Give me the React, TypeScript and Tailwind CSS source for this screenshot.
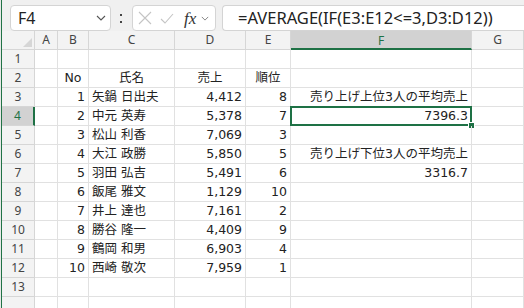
const cols = ["A", "B", "C", "D", "E", "F", "G"];

type Row = {
  no?: string;
  name?: string;
  sales?: string;
  rank?: string;
  f?: string;
  header?: boolean;
};

const rows: Row[] = [
  {},
  { no: "No", name: "氏名", sales: "売上", rank: "順位", header: true },
  { no: "1", name: "矢鍋 日出夫", sales: "4,412", rank: "8", f: "売り上げ上位3人の平均売上" },
  { no: "2", name: "中元 英寿", sales: "5,378", rank: "7", f: "7396.3" },
  { no: "3", name: "松山 利香", sales: "7,069", rank: "3" },
  { no: "4", name: "大江 政勝", sales: "5,850", rank: "5", f: "売り上げ下位3人の平均売上" },
  { no: "5", name: "羽田 弘吉", sales: "5,491", rank: "6", f: "3316.7" },
  { no: "6", name: "飯尾 雅文", sales: "1,129", rank: "10" },
  { no: "7", name: "井上 達也", sales: "7,161", rank: "2" },
  { no: "8", name: "勝谷 隆一", sales: "4,409", rank: "9" },
  { no: "9", name: "鶴岡 和男", sales: "6,903", rank: "4" },
  { no: "10", name: "西崎 敬次", sales: "7,959", rank: "1" },
  {},
  {},
];

const gridCols = "grid grid-cols-[33px_23px_31px_86px_71px_45px_181px_1fr]";
const cell = "h-[19px] border-r border-b border-[#e1e1e1] flex items-center overflow-visible whitespace-nowrap";

function Chevron({ className }: { className?: string }) {
  return (
    <svg className={className} viewBox="0 0 10 6" fill="none" stroke="currentColor" strokeWidth={1.1} aria-hidden="true">
      <path d="M1 1l4 4 4-4" />
    </svg>
  );
}

export default function App() {
  return (
    <div className="flex h-[308px] w-[524px] overflow-hidden bg-white text-[#222] [font-family:'DejaVu_Sans','Noto_Sans_CJK_JP',sans-serif]">
      <div className="w-px bg-[#e8e8e8]" />
      <div className="w-px bg-[#217346]" />
      <div className="flex min-w-0 flex-1 flex-col">
        {/* formula bar */}
        <div className="flex h-[38px] items-start bg-[#f0f0f0] pt-[5px]">
          <div className="ml-[8px] flex h-[26px] w-[101px] items-center justify-between rounded-[4px] border border-[#d4d4d4] bg-white pl-[7px] pr-[4px]">
            <span className="text-[16px] [font-family:'Noto_Sans',sans-serif]">F4</span>
            <Chevron className="h-[6px] w-[10px] text-[#555]" />
          </div>
          <div className="ml-[9px] flex h-[26px] flex-col justify-center gap-[5px]">
            <div className="h-[2px] w-[2px] bg-[#444]" />
            <div className="h-[2px] w-[2px] bg-[#444]" />
          </div>
          <div className="ml-[10px] flex h-[26px] w-[84px] items-center rounded-[4px] border border-[#d4d4d4] bg-white pl-[5px]">
            <svg className="h-[14px] w-[14px] text-[#c4c4c4]" viewBox="0 0 14 14" fill="none" stroke="currentColor" strokeWidth={1.1} aria-hidden="true">
              <path d="M1 1l12 12M13 1L1 13" />
            </svg>
            <svg className="ml-[8px] h-[11px] w-[14px] text-[#c4c4c4]" viewBox="0 0 14 11" fill="none" stroke="currentColor" strokeWidth={1.1} aria-hidden="true">
              <path d="M1 6l4 4 8-9" />
            </svg>
            <span className="ml-[10px] text-[17px] italic leading-none text-[#333] [font-family:'Liberation_Serif',serif]">fx</span>
            <Chevron className="ml-[5px] h-[5px] w-[8px] text-[#777]" />
          </div>
          <div className="ml-[6px] flex h-[26px] flex-1 items-center rounded-l-[4px] border border-r-0 border-[#d4d4d4] bg-white pl-[15px]">
            <span className="text-[16.5px] [font-family:'Noto_Sans',sans-serif]">=AVERAGE(IF(E3:E12&lt;=3,D3:D12))</span>
          </div>
        </div>

        {/* column headers */}
        <div className={`${gridCols} bg-[#f3f3f3] text-[12px] text-[#444] [font-family:'Noto_Sans',sans-serif]`}>
          <div className="relative h-[19px] border-r border-b border-[#d6d6d6]">
            <svg className="absolute right-[2px] bottom-[2px] h-[9px] w-[9px]" viewBox="0 0 9 9" aria-hidden="true">
              <path d="M9 0V9H0z" fill="#d6d6d6" />
            </svg>
          </div>
          {cols.map((c) =>
            c === "F" ? (
              <div key={c} className="flex h-[19px] items-center justify-center border-r border-b-2 border-r-[#d6d6d6] border-b-[#1e7145] bg-[#d2d2d2] pt-[2px] text-[#1e7145]">
                {c}
              </div>
            ) : (
              <div key={c} className="flex h-[19px] items-center justify-center border-r border-b border-[#d6d6d6]">
                {c}
              </div>
            ),
          )}
        </div>

        {/* rows */}
        {rows.map((r, i) => {
          const n = i + 1;
          const sel = n === 4;
          return (
            <div key={n} className={`${gridCols} text-[12.5px]`}>
              <div
                className={
                  sel
                    ? "flex h-[19px] items-center justify-center border-r-2 border-b border-r-[#1e7145] border-b-[#d6d6d6] bg-[#d2d2d2] text-[12px] text-[#1e7145] [font-family:'Noto_Sans',sans-serif]"
                    : "flex h-[19px] items-center justify-center border-r border-b border-[#d6d6d6] bg-[#f3f3f3] text-[12px] text-[#444] [font-family:'Noto_Sans',sans-serif]"
                }
              >
                {n <= 13 ? n : ""}
              </div>
              <div className={cell} />
              <div className={`${cell} ${r.header ? "justify-center" : "justify-end pr-[3px]"}`}>{r.no}</div>
              <div className={`${cell} ${r.header ? "justify-center" : "pl-[3px]"}`}>{r.name}</div>
              <div className={`${cell} ${r.header ? "justify-center" : "justify-end pr-[3px]"}`}>{r.sales}</div>
              <div className={`${cell} ${r.header ? "justify-center" : "justify-end pr-[3px]"}`}>{r.rank}</div>
              <div className={`${cell} relative justify-end pr-[3px]`}>
                {r.f}
                {sel && (
                  <>
                    <div className="absolute -top-px -left-px -right-px -bottom-px border-2 border-[#1e7145]" />
                    <div className="absolute -right-[4px] -bottom-[4px] h-[7px] w-[7px] border border-white bg-[#1e7145]" />
                  </>
                )}
              </div>
              <div className={cell} />
            </div>
          );
        })}
      </div>
    </div>
  );
}
